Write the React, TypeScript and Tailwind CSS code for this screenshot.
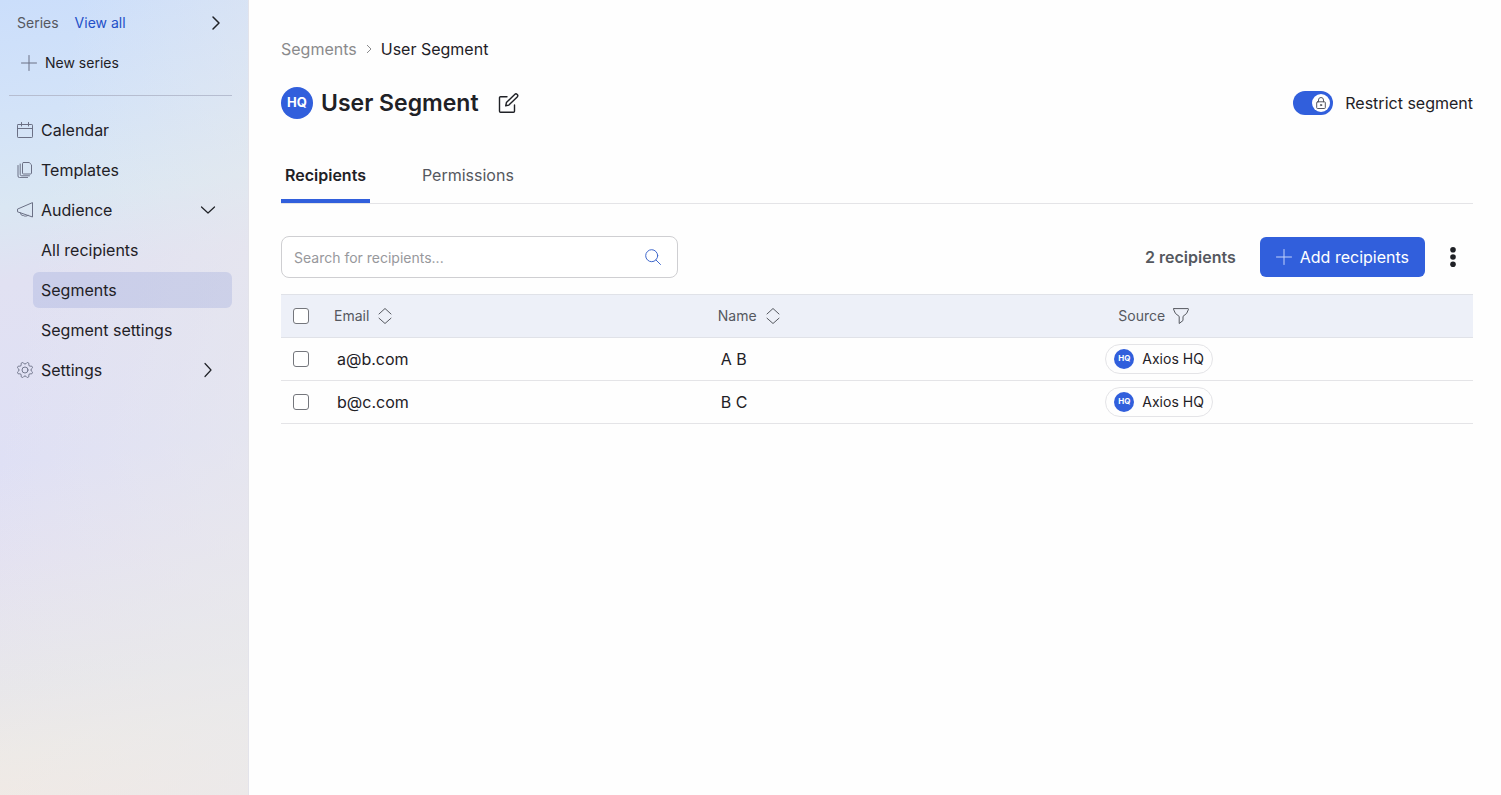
import { useState } from 'react';
import type { ReactNode } from 'react';

interface Recipient {
  email: string;
  name: string;
  source: string;
}

const RECIPIENTS: Recipient[] = [
  { email: 'a@b.com', name: 'A B', source: 'Axios HQ' },
  { email: 'b@c.com', name: 'B C', source: 'Axios HQ' },
];

interface IconProps {
  className?: string;
  children: ReactNode;
  box?: number;
  stroke?: number;
}

function Icon({ className = 'size-4', children, box = 16, stroke = 1 }: IconProps) {
  return (
    <svg
      aria-hidden="true"
      viewBox={`0 0 ${box} ${box}`}
      className={`shrink-0 ${className}`}
      fill="none"
      stroke="currentColor"
      strokeWidth={stroke}
      strokeLinecap="round"
      strokeLinejoin="round"
    >
      {children}
    </svg>
  );
}

const calendarIcon = (
  <Icon>
    <rect x="0.5" y="2.5" width="15" height="13" rx="0.7" />
    <path d="M.5 6.5h15M4.5 .5v3.5M11.5 .5v3.5" />
  </Icon>
);

const templatesIcon = (
  <Icon>
    <path d="M6.500 .5h5.700l2.300 2.300V11a1 1 0 0 1-1 1H6.500a1 1 0 0 1-1-1V1.500a1 1 0 0 1 1-1Z" />
    <path d="M3.200 2v10.300a1.500 1.500 0 0 0 1.500 1.500H12.500" />
    <path d="M1 3.500V14a1.600 1.600 0 0 0 1.600 1.600h8" />
  </Icon>
);

const megaphoneIcon = (
  <Icon>
    <path d="M15.500 1v14L.5 9.800V7.500Z" />
    <path d="M3.500 11c0 1.600 1 2.500 2.800 2.500 1.200.900 3.200.900 4.700-.100" />
  </Icon>
);

const gearIcon = (
  <Icon box={24} stroke={1.4}>
    <path d="M10.546 2.438a1.957 1.957 0 0 0 2.908 0L14.400 1.400a1.959 1.959 0 0 1 3.410 1.413l-.071 1.400a1.958 1.958 0 0 0 2.051 2.054l1.400-.071A1.959 1.959 0 0 1 22.600 9.600l-1.040.940a1.962 1.962 0 0 0 0 2.909l1.040.940a1.959 1.959 0 0 1-1.413 3.410l-1.400-.071a1.958 1.958 0 0 0-2.056 2.056l.071 1.400A1.959 1.959 0 0 1 14.400 22.600l-.941-1.041a1.959 1.959 0 0 0-2.908 0L9.606 22.600A1.959 1.959 0 0 1 6.200 21.192l.072-1.400a1.958 1.958 0 0 0-2.056-2.056l-1.400.071A1.958 1.958 0 0 1 1.400 14.400l1.041-.940a1.962 1.962 0 0 0 0-2.909L1.400 9.606A1.958 1.958 0 0 1 2.813 6.200l1.400.071a1.958 1.958 0 0 0 2.056-2.056L6.200 2.810A1.959 1.959 0 0 1 9.606 1.400Z" />
    <circle cx="12" cy="12" r="4.500" />
  </Icon>
);

const sortIcon = (
  <Icon>
    <path d="M2 6 8 .5 14 6M2 10.200l6 5.300 6-5.300" />
  </Icon>
);

const plusPath = <path d="M8 .5v15M.5 8h15" />;

function HqBadge({ small = false }: { small?: boolean }) {
  return (
    <span
      className={`flex shrink-0 items-center justify-center rounded-full bg-[#315fdc] font-bold text-white ${
        small ? 'size-5 text-[8px]' : 'size-8 text-[13px]'
      }`}
    >
      HQ
    </span>
  );
}

interface NavRowProps {
  icon: ReactNode;
  label: string;
  trailing?: ReactNode;
}

function NavRow({ icon, label, trailing }: NavRowProps) {
  return (
    <a href="#" className="flex h-9 items-center gap-2 rounded-md pr-4 pl-2">
      <span className="text-[#6b7085]">{icon}</span>
      <span className="flex-1">{label}</span>
      {trailing}
    </a>
  );
}

function SubNavRow({ label, active = false }: { label: string; active?: boolean }) {
  return (
    <a
      href="#"
      className={`ml-6 flex h-9 items-center rounded-md px-2 ${active ? 'bg-[#6f84cc]/20' : ''}`}
    >
      {label}
    </a>
  );
}

function Sidebar() {
  return (
    <aside className="w-[249px] shrink-0 border-r border-[#e3e3ea] bg-[linear-gradient(100deg,#e9e9ec00_20%,#e9e9ecb3_100%),linear-gradient(172deg,#cbdefb_0%,#d3e3f8_14%,#dae7f3_25%,#e1e1f2_34%,#dfe0f5_56%,#e4e2f1_68%,#e8e7ea_83%,#eeeae6_91%,#f3e9e3_100%)] pt-[11px] pr-4 pl-[9px] text-[#1f2126]">
      <div className="flex h-6 items-center px-2 text-sm">
        <span className="text-[#55585f]">Series</span>
        <a href="#" className="ml-4 text-[#2450c8]">
          View all
        </a>
        <button type="button" aria-label="Expand series" className="ml-auto">
          <Icon stroke={1.5}>
            <path d="m5 2 6 6-6 6" />
          </Icon>
        </button>
      </div>
      <button type="button" className="mt-2.5 flex h-9 items-center gap-2 px-3 text-sm">
        <Icon className="size-4 text-[#6b7085]">{plusPath}</Icon>
        New series
      </button>
      <hr className="mt-3.5 border-[#b6bdd0]" />
      <nav className="mt-4 flex flex-col gap-1">
        <NavRow icon={calendarIcon} label="Calendar" />
        <NavRow icon={templatesIcon} label="Templates" />
        <NavRow
          icon={megaphoneIcon}
          label="Audience"
          trailing={
            <Icon stroke={1.2}>
              <path d="m1.500 5 6.500 6 6.500-6" />
            </Icon>
          }
        />
        <SubNavRow label="All recipients" />
        <SubNavRow label="Segments" active />
        <SubNavRow label="Segment settings" />
        <NavRow
          icon={gearIcon}
          label="Settings"
          trailing={
            <Icon stroke={1.2}>
              <path d="m5 1.500 6 6.500-6 6.500" />
            </Icon>
          }
        />
      </nav>
    </aside>
  );
}

function Checkbox({ label }: { label: string }) {
  return (
    <input
      type="checkbox"
      aria-label={label}
      className="block size-4 appearance-none rounded-[3px] border border-[#74767c] bg-white checked:bg-[#315fdc]"
    />
  );
}

function RecipientsTable() {
  return (
    <table className="mt-4 w-full table-fixed border-collapse text-left">
      <thead>
        <tr className="h-[43px] border-y border-[#e0e2e8] bg-[#edf0f8] text-sm text-[#55585f]">
          <th className="w-10 pl-3">
            <Checkbox label="Select all recipients" />
          </th>
          <th className="w-[32.2%] pl-[13px] font-normal">
            <button type="button" className="flex items-center gap-2">
              Email
              {sortIcon}
            </button>
          </th>
          <th className="w-[33.6%] pl-[13px] font-normal">
            <button type="button" className="flex items-center gap-2">
              Name
              {sortIcon}
            </button>
          </th>
          <th className="pl-[13px] font-normal">
            <button type="button" className="flex items-center gap-2">
              Source
              <Icon>
                <path d="M1 .6h14q.6 0 .5.700Q14.500 6 10 8.400V12.500L6.200 15.500V8.400Q1.500 6 .5 1.300.4.600 1 .6Z" />
              </Icon>
            </button>
          </th>
        </tr>
      </thead>
      <tbody>
        {RECIPIENTS.map((recipient) => (
          <tr key={recipient.email} className="h-[43px] border-b border-[#e4e4e7]">
            <td className="pl-3">
              <Checkbox label={`Select ${recipient.email}`} />
            </td>
            <td className="pl-4">{recipient.email}</td>
            <td className="pl-4">{recipient.name}</td>
            <td>
              <span className="inline-flex h-[30px] items-center gap-2 rounded-full border border-[#e4e4e7] px-2 align-middle text-sm">
                <HqBadge small />
                {recipient.source}
              </span>
            </td>
          </tr>
        ))}
      </tbody>
    </table>
  );
}

export default function App() {
  const [restricted, setRestricted] = useState(true);

  return (
    <div className="flex min-h-screen bg-[#fefefe] font-['Inter',sans-serif] text-base text-[#1f2126]">
      <Sidebar />

      <main className="min-w-0 flex-1 pt-[37px] pr-7 pl-8">
        {/* Breadcrumb */}
        <nav aria-label="Breadcrumb" className="flex items-center gap-2">
          <a href="#" className="text-[#8a8a8c]">
            Segments
          </a>
          <Icon className="size-2 text-[#8a8a8c]" box={8}>
            <path d="M2 0l4 4-4 4" />
          </Icon>
          <span>User Segment</span>
        </nav>

        {/* Title */}
        <header className="mt-[26px] flex h-8 items-center">
          <HqBadge />
          <h1 className="ml-2 text-[23px] font-semibold">User Segment</h1>
          <button type="button" aria-label="Edit segment name" className="ml-4">
            <Icon className="size-6" box={24} stroke={1.4}>
              <path d="M12 5.800H5.500a1 1 0 0 0-1 1V20.300a1 1 0 0 0 1 1H18.500a1 1 0 0 0 1-1V14" />
              <path d="m10.700 14.800.7-3.200 8.300-8.200a1.700 1.700 0 0 1 2.500 2.500l-8.300 8.200Z" />
            </Icon>
          </button>
          <label className="ml-auto flex cursor-pointer items-center gap-3">
            <input
              type="checkbox"
              role="switch"
              className="peer sr-only"
              checked={restricted}
              onChange={(e) => setRestricted(e.target.checked)}
            />
            <span
              className={`flex h-6 w-10 items-center rounded-full px-[3px] ${
                restricted ? 'justify-end bg-[#315fdc]' : 'justify-start bg-gray-400'
              }`}
            >
              <span className="flex size-[18px] items-center justify-center rounded-full bg-white">
                <Icon className="size-3 text-[#55585f]" box={12}>
                  <rect x="1.700" y="4.800" width="8.600" height="6.700" rx="0.800" />
                  <path d="M3.500 4.800V3a2.500 2.500 0 0 1 5 0v1.800" />
                  <circle cx="6" cy="8.100" r="0.700" />
                </Icon>
              </span>
            </span>
            Restrict segment
          </label>
        </header>

        {/* Tabs */}
        <div role="tablist" className="mt-8 flex gap-12 border-b border-[#e4e4e7]">
          <button
            type="button"
            role="tab"
            aria-selected="true"
            className="h-[52px] border-b-4 border-[#315fdc] px-1 font-semibold"
          >
            Recipients
          </button>
          <button
            type="button"
            role="tab"
            aria-selected="false"
            className="h-[52px] border-b-4 border-transparent px-1 text-[#55585f]"
          >
            Permissions
          </button>
        </div>

        {/* Search and actions */}
        <div className="mt-8 flex items-center">
          <label className="flex h-[42px] w-1/3 items-center rounded-lg border border-[#cfcfd2] bg-white pr-4 pl-3">
            <input
              type="text"
              aria-label="Search for recipients"
              placeholder="Search for recipients..."
              className="h-full min-w-0 flex-1 text-sm outline-none placeholder:text-[#97989c]"
            />
            <Icon className="size-4 text-[#3f68cc]">
              <circle cx="6.700" cy="6.700" r="6" />
              <path d="m11 11 4.500 4.500" />
            </Icon>
          </label>
          <span className="ml-auto font-semibold text-[#55585f]">2 recipients</span>
          <button
            type="button"
            className="ml-6 flex h-10 items-center gap-2 rounded-md bg-[#315fdc] px-4 text-white"
          >
            <Icon className="size-4 text-[#c3d2fa]">{plusPath}</Icon>
            Add recipients
          </button>
          <button type="button" aria-label="More actions" className="ml-4 flex h-10 w-8 items-center">
            <svg aria-hidden="true" viewBox="0 0 24 24" className="size-6 shrink-0" fill="currentColor">
              <circle cx="12" cy="4.700" r="2.800" />
              <circle cx="12" cy="12" r="2.800" />
              <circle cx="12" cy="19.300" r="2.800" />
            </svg>
          </button>
        </div>

        <RecipientsTable />
      </main>
    </div>
  );
}
